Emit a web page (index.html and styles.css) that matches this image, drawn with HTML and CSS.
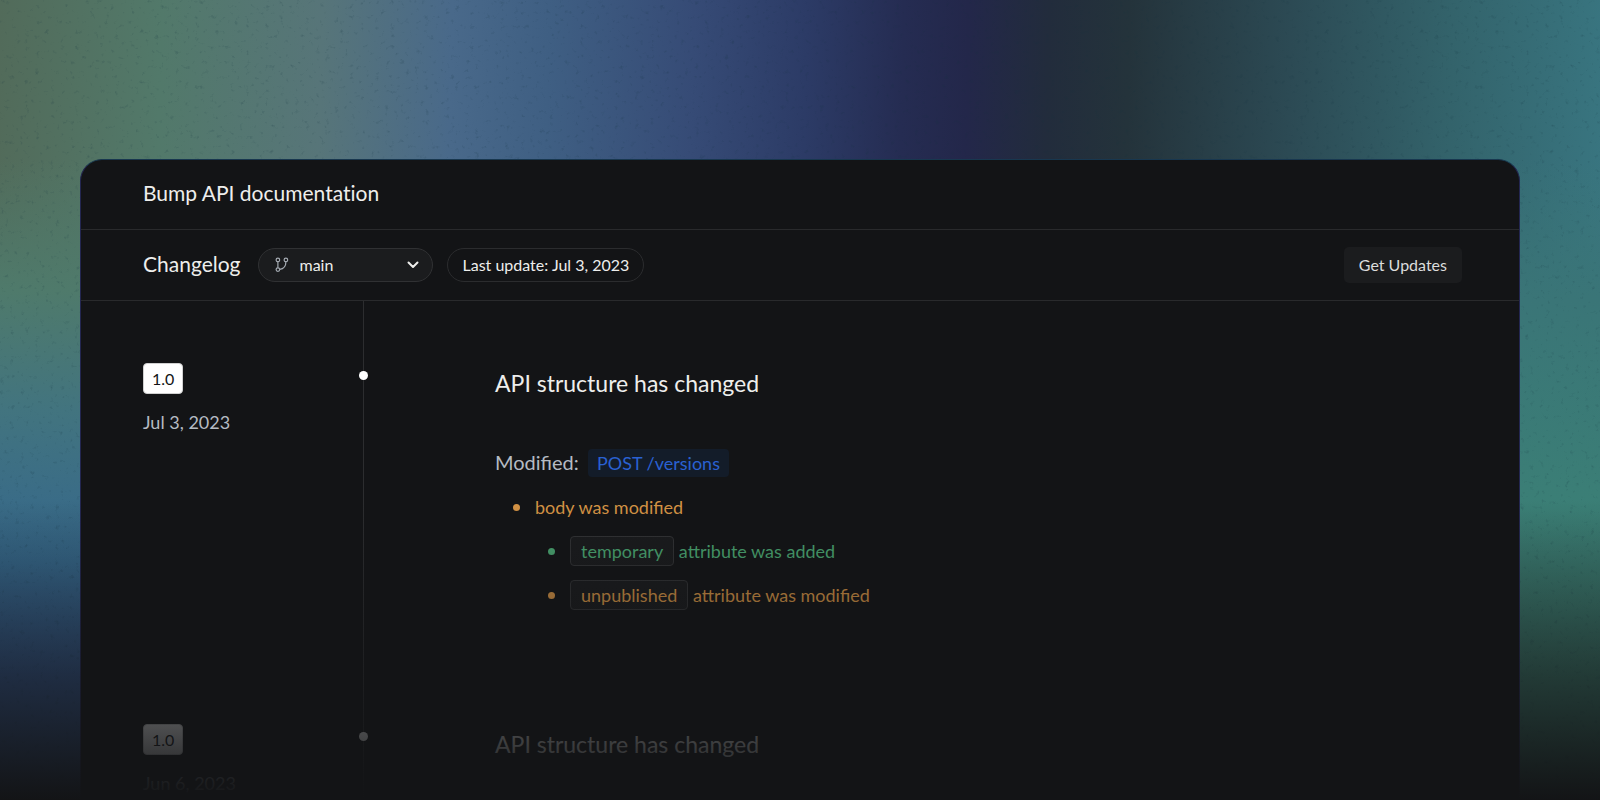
FILE: index.html
```html
<!DOCTYPE html>
<html lang="en">
<head>
<meta charset="utf-8">
<title>Bump API documentation</title>
<link rel="stylesheet" href="styles.css">
</head>
<body>
<div class="page">
  <svg class="grain" aria-hidden="true">
    <filter id="grain" color-interpolation-filters="sRGB">
      <feTurbulence type="fractalNoise" baseFrequency="0.2" numOctaves="4" seed="8"/>
      <feColorMatrix values="0 0 0 0 0.08  0 0 0 0 0.2  0 0 0 0 0.25  2.5 0 0 0 -1.600"/>
    </filter>
    <rect width="100%" height="100%" filter="url(#grain)"/>
  </svg>
  <main class="card">
    <header class="card-header"><h1 class="title">Bump API documentation</h1></header>
    <div class="toolbar">
      <h2 class="title">Changelog</h2>
      <div class="branch">
        <svg class="branch-icon" viewBox="0 0 14 16" aria-hidden="true"><circle cx="2.900" cy="2.900" r="1.800"/><circle cx="10.900" cy="2.900" r="1.800"/><circle cx="2.900" cy="12.600" r="1.800"/><path d="M2.900 4.700v6.100M10.900 4.700c0 4.300-2.300 7.100-6.200 7.700"/></svg>
        <select class="branch-select" aria-label="Branch"><option>main</option></select>
        <svg class="chevron" viewBox="0 0 12 8" aria-hidden="true"><path d="M1.500 1.500 6 6l4.500-4.500"/></svg>
      </div>
      <span class="updated">Last update: Jul 3, 2023</span>
      <button class="button" type="button">Get Updates</button>
    </div>
    <section class="entry">
      <div class="meta"><span class="version">1.0</span><time class="date" datetime="2023-07-03">Jul 3, 2023</time></div>
      <div class="body">
        <h3 class="heading">API structure has changed</h3>
        <p class="operation">Modified: <a class="endpoint" href="#">POST /versions</a></p>
        <ul class="changes">
          <li class="modified">body was modified
            <ul class="changes">
              <li class="added"><code class="attr">temporary</code> attribute was added</li>
              <li class="modified"><code class="attr">unpublished</code> attribute was modified</li>
            </ul>
          </li>
        </ul>
      </div>
    </section>
    <section class="entry">
      <div class="meta"><span class="version">1.0</span><time class="date" datetime="2023-06-06">Jun 6, 2023</time></div>
      <div class="body"><h3 class="heading">API structure has changed</h3></div>
    </section>
  </main>
</div>
</body>
</html>
```

FILE: styles.css
```css
* { box-sizing: border-box; }
body {
  margin: 0;
  background: #131416;
  color: #eeeeec;
  font-family: Lato, "Open Sans", sans-serif;
}
h1, h2, h3, p, ul { margin: 0; padding: 0; font-weight: 400; }
.page {
  position: relative;
  height: 100vh;
  overflow: hidden;
  padding: 159px 5% 0;
  background:
    linear-gradient(180deg, transparent 160px, #4f7a6b 290px, #42747f 410px, #3b6d86 490px, #35678a 560px, #304f80 680px) left / 20% 100% no-repeat,
    linear-gradient(180deg, transparent 160px, #3a7577 300px, #3b7f76 510px, #387063 680px) right / 20% 100% no-repeat,
    linear-gradient(91deg, #526b5a 0%, #52796a 10%, #577579 20%, #49698a 28%, #3f5f83 34%, #364b76 43%, #2c3b66 50%, #252c52 56%, #23274a 60%, #222c3c 65%, #24333b 70%, #2c4a54 80%, #33636b 90%, #397681 100%);
}
.page::after {
  content: "";
  position: absolute;
  inset: 500px 0 0;
  background: linear-gradient(180deg, rgba(19, 20, 22, 0), #131416);
  pointer-events: none;
}
.grain { position: absolute; inset: 0; width: 100%; height: 100%; opacity: 0.3; }
.card {
  position: relative;
  min-height: 100vh;
  border: 1px solid #232650;
  border-top-color: #18374f;
  border-radius: 22px;
  background: #131416;
}
.card-header, .toolbar {
  display: flex;
  align-items: center;
  border-bottom: 1px solid #292a2c;
}
.card-header { height: 70px; padding: 0 62px 4px; }
.toolbar { height: 71px; padding: 0 57px 0 62px; gap: 14px; }
.title { font-size: 21px; line-height: 28px; font-variant-ligatures: none; }
.toolbar .title { padding: 0 4px 2px 0; }
.branch { position: relative; display: flex; align-items: center; }
.branch-select {
  appearance: none;
  width: 175px;
  height: 34px;
  padding: 0 40px 2px;
  border: 1px solid #303133;
  border-radius: 17px;
  background: #1b1c1e;
  color: inherit;
  font: 16px Lato, "Open Sans", sans-serif;
}
.branch-icon { position: absolute; left: 17px; width: 14px; height: 16px; fill: none; stroke: #a4aab2; stroke-width: 1.2; }
.chevron { position: absolute; right: 14px; width: 12px; height: 8px; fill: none; stroke: #eeeeec; stroke-width: 2; stroke-linecap: round; stroke-linejoin: round; }
.updated {
  padding: 0 14px;
  border: 1px solid #2b2c2e;
  border-radius: 17px;
  font-size: 16px;
  line-height: 32px;
}
.button {
  height: 36px;
  margin-left: auto;
  padding: 0 15px 2px;
  border: 0;
  border-radius: 5px;
  background: #1b1c1e;
  color: #dcdcdc;
  font: 16px Lato, "Open Sans", sans-serif;
}
.entry {
  display: grid;
  grid-template-columns: 220px 1fr;
  min-height: 361px;
  padding-left: 62px;
}
.meta { display: flex; flex-direction: column; align-items: flex-start; gap: 14px; padding-top: 62px; }
.version {
  padding: 0 8px;
  border: 1px solid #d0d0d0;
  border-radius: 4px;
  background: #fff;
  color: #131416;
  font-size: 16px;
  line-height: 29px;
}
.date { color: #b5bbc3; font-size: 18px; line-height: 28px; }
.body { position: relative; padding: 67px 0 0 131px; border-left: 1px solid #2c2d2f; }
.body::before {
  content: "";
  position: absolute;
  top: 70px;
  left: -5px;
  width: 9px;
  height: 9px;
  border-radius: 50%;
  background: #fff;
}
.heading { font-size: 23px; line-height: 30px; }
.operation { margin-top: 48px; color: #b5bbc3; font-size: 20px; line-height: 32px; }
.endpoint {
  display: inline-block;
  margin-left: 4px;
  padding: 0 9px;
  border-radius: 4px;
  background: #131c29;
  color: #2a61d2;
  font-size: 18px;
  line-height: 28px;
  text-decoration: none;
}
.changes { list-style: none; font-size: 18px; line-height: 32px; }
.operation + .changes { margin-top: 13px; padding-left: 18px; }
.changes .changes { padding-left: 13px; }
.changes li { position: relative; padding-left: 22px; }
.changes .changes li { margin-top: 12px; }
.changes li::before {
  content: "";
  position: absolute;
  top: 13px;
  left: 0;
  width: 7px;
  height: 7px;
  border-radius: 50%;
  background: currentColor;
}
.modified { color: #d69445; }
.added { color: #4ba873; }
.attr {
  display: inline-block;
  padding: 0 10px;
  border: 1px solid #323335;
  border-radius: 4px;
  background: #1a1b1d;
  font-family: inherit;
  line-height: 28px;
}
```
